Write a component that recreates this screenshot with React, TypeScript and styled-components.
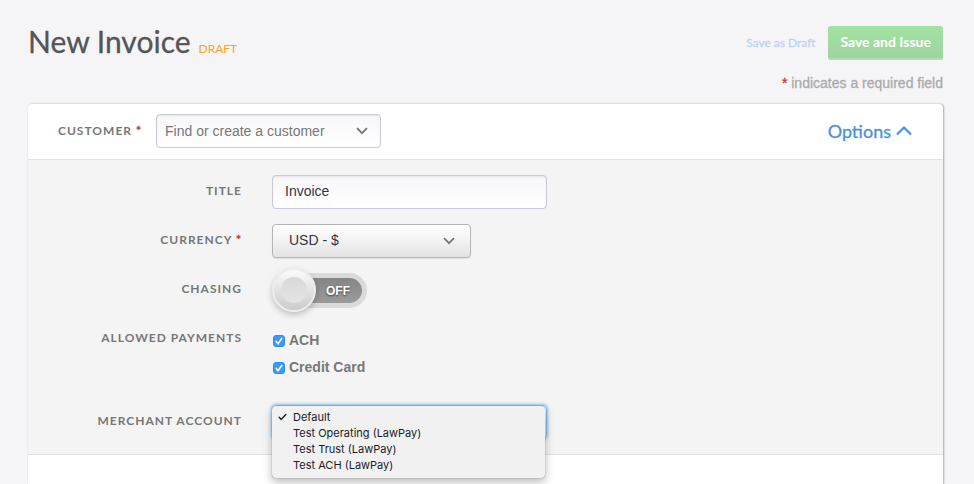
import React, { useState } from "react";
import styled, { createGlobalStyle, css } from "styled-components";

const lato = `Lato, "Open Sans", sans-serif`;
const helvetica = `"Liberation Sans", Arial, sans-serif`;

const GlobalStyle = createGlobalStyle`
  *, *::before, *::after { box-sizing: border-box; }
  body {
    margin: 0;
    background: #f5f5f8;
    color: #777;
    font: 14px/20px ${helvetica};
  }
`;

const Page = styled.div`
  display: flex;
  flex-direction: column;
  min-height: 100vh;
  padding: 22px 31px 0 28px;
`;

const PageHeader = styled.header`
  display: flex;
  justify-content: space-between;
  align-items: flex-start;
`;

const Title = styled.h1`
  display: flex;
  align-items: baseline;
  gap: 8px;
  margin: 0;
  color: #555;
  font: 400 30px/38px ${lato};
  -webkit-text-stroke: 0.3px;
`;

const Status = styled.span`
  color: #ff9f1c;
  font-size: 12px;
  line-height: 16px;
  -webkit-text-stroke: 0;
`;

const Actions = styled.div`
  display: flex;
  align-items: center;
  gap: 13px;
  padding-top: 4px;
`;

const LinkButton = styled.button`
  padding: 0;
  border: 0;
  background: none;
  color: #bcd2f0;
  font: 400 12px/18px ${lato};
  -webkit-text-stroke: 0.3px;
  cursor: pointer;
`;

const PrimaryButton = styled.button`
  height: 34px;
  padding: 0 12px 2px;
  border: 0;
  border-radius: 3px;
  background: linear-gradient(#a2e2a2, #9dd49f);
  box-shadow: inset 0 -2px #b3d9b5;
  color: #fff;
  font: 700 14px/20px ${lato};
  cursor: pointer;
`;

const RequiredNote = styled.p`
  margin: 13px 0 11px;
  color: #aaa;
  text-align: right;
  -webkit-text-stroke: 0.3px #aaa;
`;

const Mark = styled.span`
  color: #c03a3a;
  -webkit-text-stroke: 0.3px #c03a3a;
`;

const Card = styled.main`
  display: flex;
  flex: 1;
  flex-direction: column;
  border-radius: 4px 4px 0 0;
  background: #fff;
  box-shadow: 1px 0 2px rgba(0, 0, 0, 0.3), 0 0 1px rgba(0, 0, 0, 0.1);
`;

const CardHeader = styled.div`
  display: flex;
  align-items: center;
  justify-content: space-between;
  padding: 10px 31px 11px 30px;
`;

const CustomerField = styled.div`
  display: flex;
  align-items: center;
  gap: 14px;
`;

const labelStyle = css`
  color: #777;
  font: 700 12px/16px ${lato};
  letter-spacing: 1px;
  text-transform: uppercase;
`;

const Label = styled.label`
  ${labelStyle}
`;

const LabelText = styled.span`
  ${labelStyle}
`;

const OptionsButton = styled.button`
  display: flex;
  align-items: center;
  gap: 5px;
  padding: 0;
  border: 0;
  background: none;
  color: #4a90dc;
  font: 400 18px/24px ${lato};
  -webkit-text-stroke: 0.3px;
  cursor: pointer;
`;

const Options = styled.section`
  display: flex;
  flex-direction: column;
  gap: 15px;
  padding: 15px 0;
  border-top: 1px solid #e4e4e6;
  border-bottom: 1px solid #e0e0e2;
  background: #f4f4f4;
`;

const Row = styled.div`
  display: grid;
  grid-template-columns: 214px 1fr;
  column-gap: 30px;
  align-items: start;

  & > :first-child {
    padding-top: 8px;
    text-align: right;
  }
`;

const Control = styled.div<{ $width: number; $inset?: number }>`
  position: relative;
  display: grid;
  align-items: center;
  width: ${(p) => p.$width}px;
  max-width: 100%;

  & > * { grid-area: 1 / 1; }
  & > svg {
    justify-self: end;
    margin-right: ${(p) => p.$inset ?? 13}px;
    pointer-events: none;
  }
`;

const field = css`
  width: 100%;
  height: 34px;
  border: 1px solid #c9c9d8;
  border-radius: 4px;
  outline: 0;
  background: linear-gradient(#f7f7fa, #fff);
  box-shadow: inset 0 1px 2px rgba(0, 0, 0, 0.08);
  color: #334;
  font: 14px/20px ${helvetica};
`;

const TextInput = styled.input`
  ${field}
  padding: 0 12px 2px;
`;

const ComboInput = styled.input`
  ${field}
  padding: 0 36px 0 8px;
  &::placeholder { color: #777; opacity: 1; }
`;

const Select = styled.select<{ $open?: boolean }>`
  ${field}
  appearance: none;
  padding: 0 36px 2px 16px;
  border-color: #b4b4b4;
  background: linear-gradient(#fff, #e4e4e4);
  box-shadow: 0 1px 1px rgba(0, 0, 0, 0.08);
  ${(p) =>
    p.$open &&
    css`
      border-color: #86bfe8;
      box-shadow: 0 0 3px 1px #8fc7ee;
    `}
`;

const Switch = styled.label`
  position: relative;
  display: block;
  width: 95px;
  height: 35px;
  margin-bottom: -1px;
  border: 5px solid #dadada;
  border-radius: 18px;
  background: linear-gradient(#858585, #9b9b9b);
  cursor: pointer;
`;

const SwitchInput = styled.input`
  position: absolute;
  inset: 0;
  margin: 0;
  opacity: 0;
`;

const SwitchText = styled.span<{ $on: boolean }>`
  display: block;
  padding: ${(p) => (p.$on ? "0 0 0 12px" : "0 12px 0 0")};
  color: #fff;
  font: 700 12px/27px ${helvetica};
  text-align: ${(p) => (p.$on ? "left" : "right")};
  text-shadow: 0 1px 2px rgba(0, 0, 0, 0.6);
`;

const Knob = styled.span<{ $on: boolean }>`
  position: absolute;
  top: -10px;
  left: ${(p) => (p.$on ? 46 : -5)}px;
  display: grid;
  place-items: center;
  width: 44px;
  height: 44px;
  border: 2px solid #ececec;
  border-radius: 50%;
  background: linear-gradient(#fbfbfb, #cbcbcb);
  box-shadow: 0 3px 6px rgba(0, 0, 0, 0.22);

  &::after {
    content: "";
    width: 26px;
    height: 26px;
    border-radius: 50%;
    background: linear-gradient(#d8d8d8, #e4e4e4);
  }
`;

const CheckList = styled.div`
  display: flex;
  flex-direction: column;
  padding: 5px 0 9px;
`;

const CheckLabel = styled.label`
  display: flex;
  align-items: center;
  gap: 4px;
  width: fit-content;
  padding-left: 1px;
  font-weight: 700;
  line-height: 27px;
`;

const CheckBox = styled.span`
  display: grid;
  width: 12px;
  height: 12px;
  & > * { grid-area: 1 / 1; }
  & > svg { pointer-events: none; }
`;

const CheckInput = styled.input`
  appearance: none;
  width: 12px;
  height: 12px;
  margin: 0;
  border: 1px solid #b4b4b4;
  border-radius: 3px;
  background: #fff;
  &:checked {
    border-color: #2f8ef5;
    background: #3b99fc;
  }
  &:not(:checked) + svg { visibility: hidden; }
`;

const Menu = styled.ul`
  position: absolute;
  top: 1px;
  left: 0;
  z-index: 1;
  width: calc(100% - 2px);
  margin: 0;
  padding: 3px 0 5px;
  border-radius: 4px;
  background: #f0f1f0;
  box-shadow: 0 0 1px rgba(0, 0, 0, 0.6), 0 4px 10px rgba(0, 0, 0, 0.28);
  color: #1b1b2b;
  font: 400 11px/16px Inter, sans-serif;
  list-style: none;
`;

const MenuItem = styled.li`
  display: grid;
  grid-template-columns: 9px 1fr;
  column-gap: 6px;
  align-items: center;
  padding-left: 6px;
  cursor: default;
`;

const ItemText = styled.span`
  grid-column: 2;
`;

type IconProps = { up?: boolean };

const Chevron = ({ up }: IconProps) =>
  up ? (
    <svg width="16" height="12" viewBox="0 0 16 12" fill="none" stroke="currentColor" strokeWidth="2.2">
      <path d="M1 9.5 8 2.5l7 7" />
    </svg>
  ) : (
    <svg width="12" height="8" viewBox="0 0 12 8" fill="none" stroke="#777" strokeWidth="1.8">
      <path d="M1 1.2 6 6.2l5-5" />
    </svg>
  );

const Tick = ({ color }: { color: string }) => (
  <svg width="12" height="12" viewBox="0 0 12 12" fill="none" stroke={color} strokeWidth="1.6" strokeLinecap="round">
    <path d="M3.2 6.4 5.1 8.6 8.8 3.4" />
  </svg>
);

const MenuTick = () => (
  <svg width="9" height="8" viewBox="0 0 9 8" fill="none" stroke="currentColor" strokeWidth="1.4" strokeLinecap="round">
    <path d="M1.2 4.2 3.2 6.4 7.8 1.6" />
  </svg>
);

const payments = ["ACH", "Credit Card"];
const accounts = ["Default", "Test Operating (LawPay)", "Test Trust (LawPay)", "Test ACH (LawPay)"];

export default function App() {
  const [expanded, setExpanded] = useState(true);
  const [chasing, setChasing] = useState(false);
  const [account, setAccount] = useState(accounts[0]);
  const [menuOpen, setMenuOpen] = useState(true);

  const choose = (name: string) => {
    setAccount(name);
    setMenuOpen(false);
  };

  return (
    <>
      <GlobalStyle />
      <Page>
        <PageHeader>
          <Title>
            New Invoice <Status>DRAFT</Status>
          </Title>
          <Actions>
            <LinkButton type="button">Save as Draft</LinkButton>
            <PrimaryButton type="button">Save and Issue</PrimaryButton>
          </Actions>
        </PageHeader>
        <RequiredNote>
          <Mark>*</Mark> indicates a required field
        </RequiredNote>
        <Card>
          <CardHeader>
            <CustomerField>
              <Label htmlFor="customer">
                Customer <Mark>*</Mark>
              </Label>
              <Control $width={225}>
                <ComboInput id="customer" role="combobox" aria-expanded={false} placeholder="Find or create a customer" />
                <Chevron />
              </Control>
            </CustomerField>
            <OptionsButton type="button" aria-expanded={expanded} onClick={() => setExpanded(!expanded)}>
              Options <Chevron up />
            </OptionsButton>
          </CardHeader>
          {expanded && (
            <Options>
              <Row>
                <Label htmlFor="title">Title</Label>
                <Control $width={275}>
                  <TextInput id="title" defaultValue="Invoice" />
                </Control>
              </Row>
              <Row>
                <Label htmlFor="currency">
                  Currency <Mark>*</Mark>
                </Label>
                <Control $width={199} $inset={16}>
                  <Select id="currency" defaultValue="USD">
                    <option value="USD">USD - $</option>
                  </Select>
                  <Chevron />
                </Control>
              </Row>
              <Row>
                <Label htmlFor="chasing">Chasing</Label>
                <Switch>
                  <SwitchInput
                    id="chasing"
                    type="checkbox"
                    role="switch"
                    checked={chasing}
                    onChange={(e) => setChasing(e.target.checked)}
                  />
                  <SwitchText $on={chasing}>{chasing ? "ON" : "OFF"}</SwitchText>
                  <Knob $on={chasing} />
                </Switch>
              </Row>
              <Row role="group" aria-labelledby="payments">
                <LabelText id="payments">Allowed Payments</LabelText>
                <CheckList>
                  {payments.map((name) => (
                    <CheckLabel key={name}>
                      <CheckBox>
                        <CheckInput type="checkbox" defaultChecked />
                        <Tick color="#fff" />
                      </CheckBox>
                      {name}
                    </CheckLabel>
                  ))}
                </CheckList>
              </Row>
              <Row>
                <Label htmlFor="account">Merchant Account</Label>
                <Control $width={275}>
                  <Select id="account" $open={menuOpen} value={account} onChange={(e) => choose(e.target.value)}>
                    {accounts.map((name) => (
                      <option key={name}>{name}</option>
                    ))}
                  </Select>
                  {menuOpen && (
                    <Menu role="listbox" aria-label="Merchant Account">
                      {accounts.map((name) => (
                        <MenuItem key={name} role="option" aria-selected={name === account} onClick={() => choose(name)}>
                          {name === account && <MenuTick />}
                          <ItemText>{name}</ItemText>
                        </MenuItem>
                      ))}
                    </Menu>
                  )}
                </Control>
              </Row>
            </Options>
          )}
        </Card>
      </Page>
    </>
  );
}
